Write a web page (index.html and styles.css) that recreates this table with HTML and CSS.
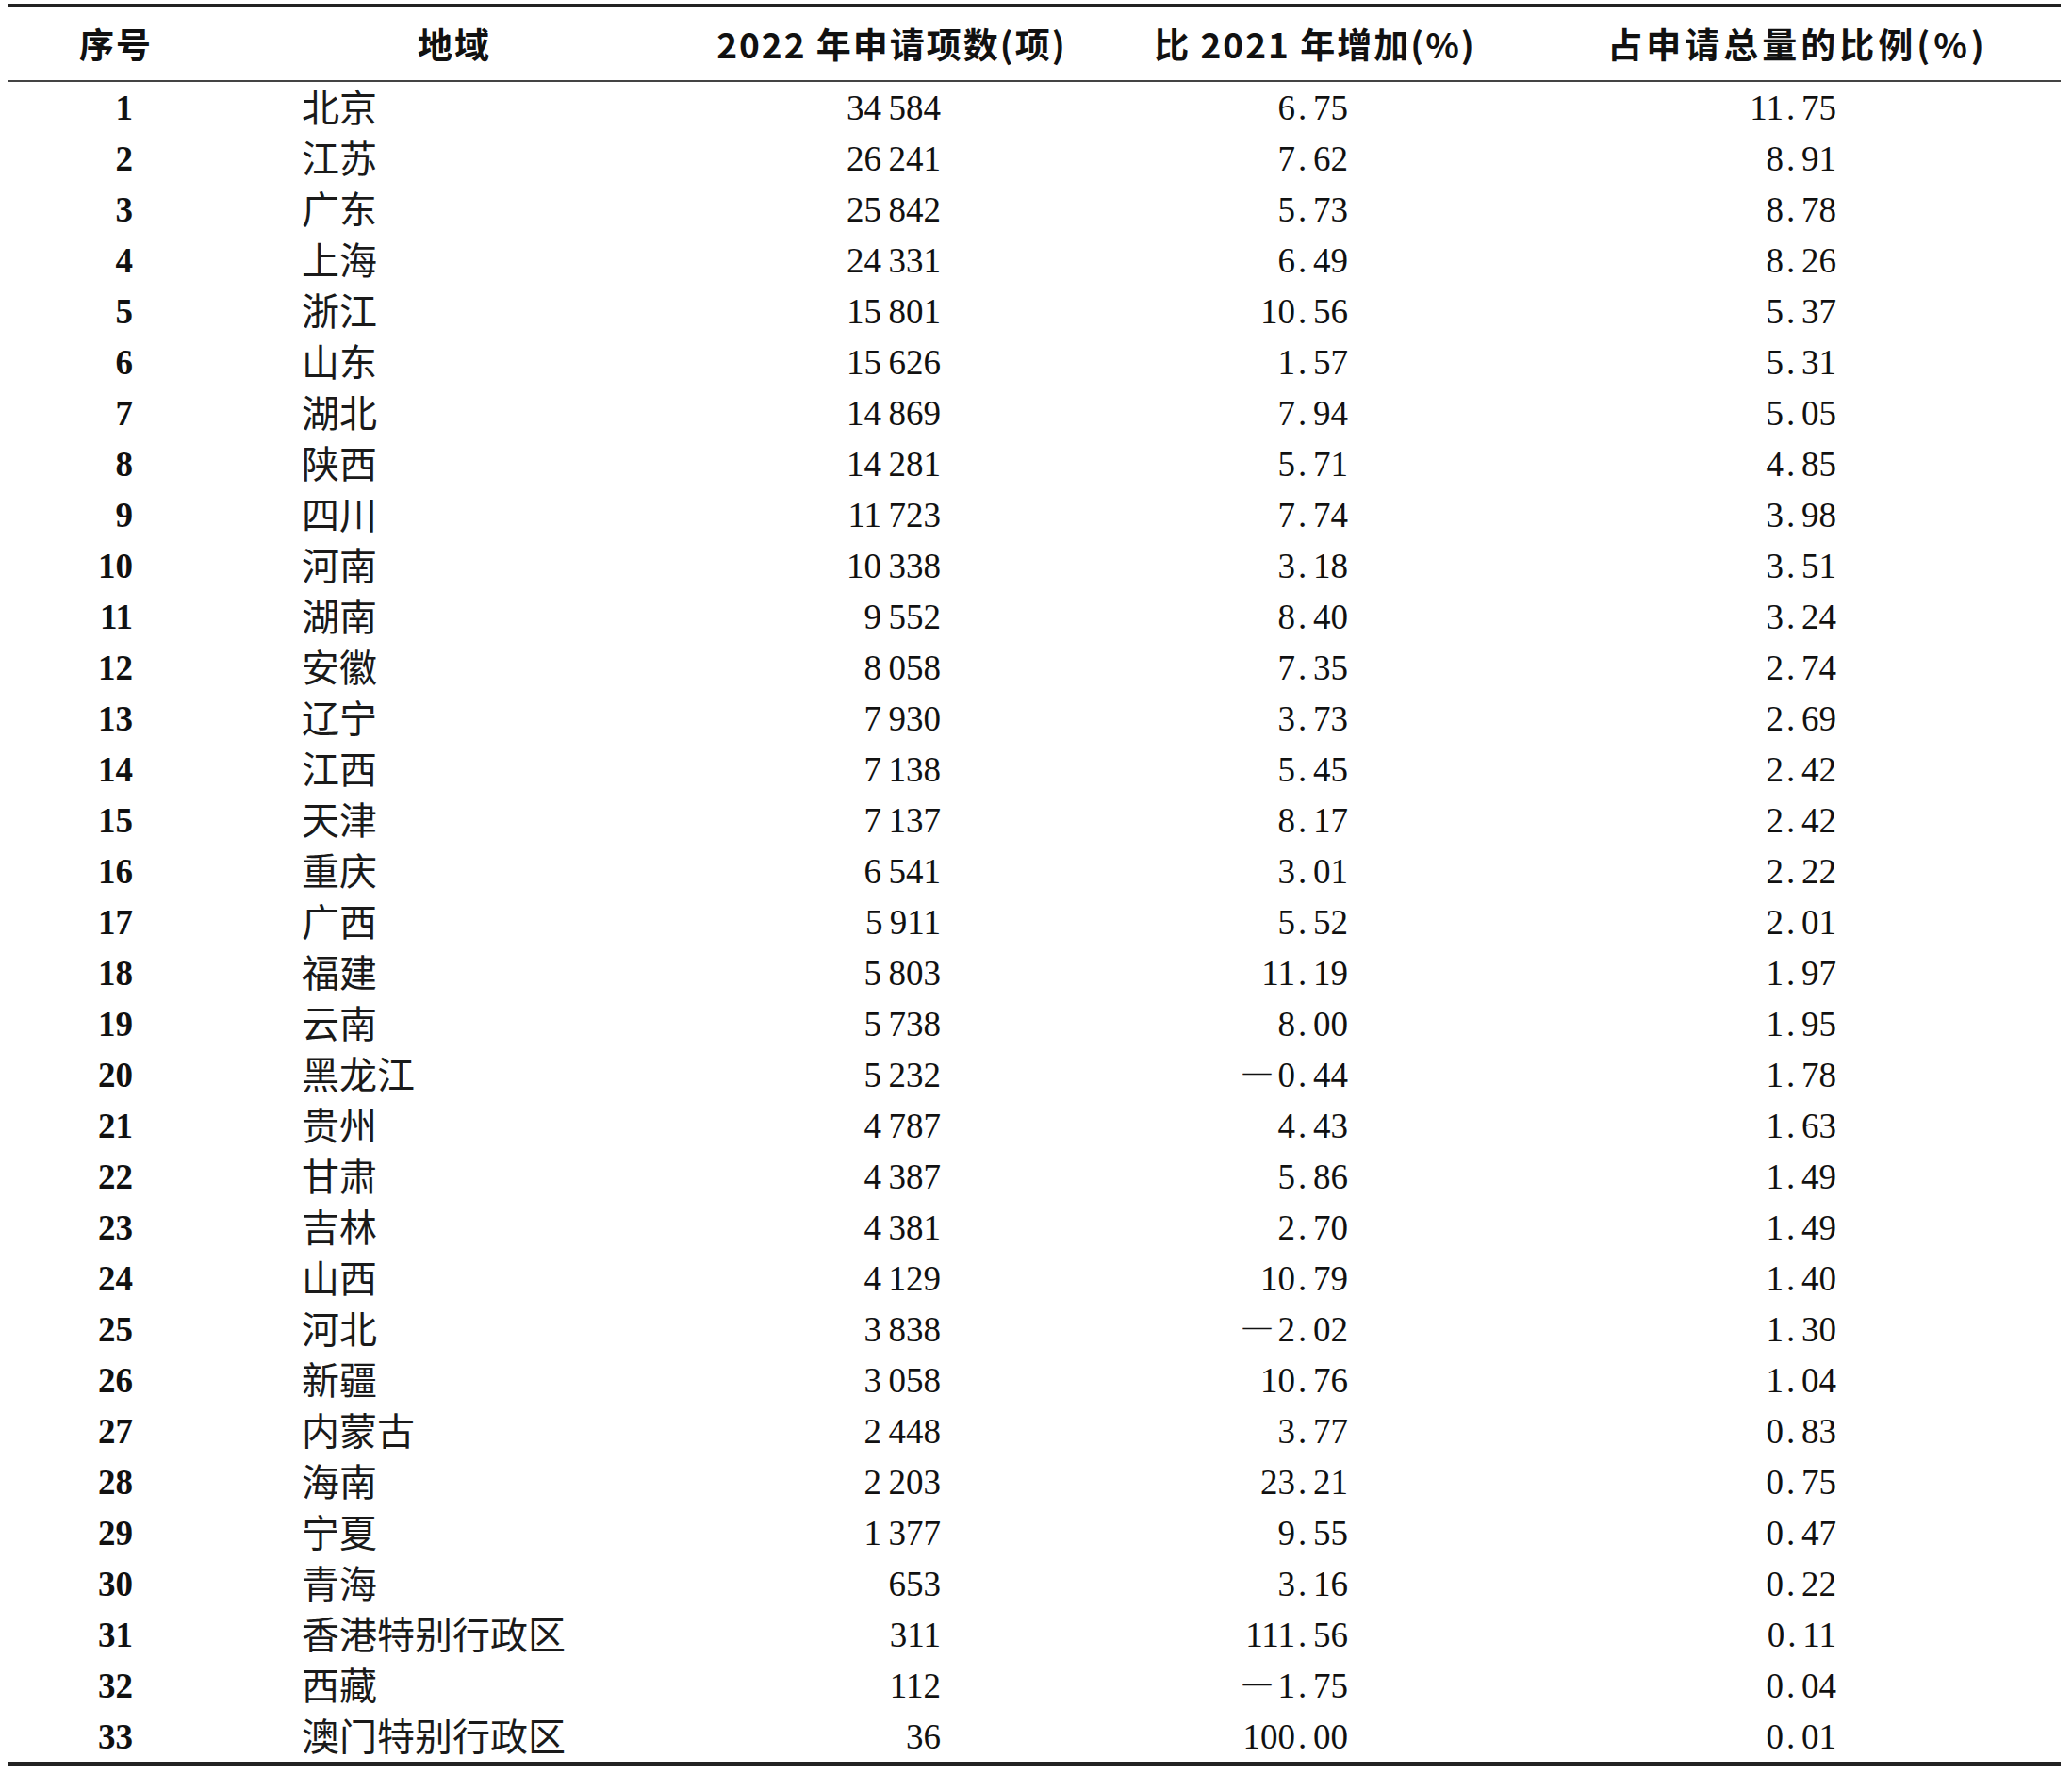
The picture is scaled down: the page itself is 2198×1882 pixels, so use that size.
FILE: index.html
```html
<!DOCTYPE html>
<html lang="zh-CN">
<head>
<meta charset="utf-8">
<title>2022 年申请项数</title>
<link rel="stylesheet" href="styles.css">
</head>
<body>
<div class="tbl">
  <div class="row head">
    <div class="h">序号</div>
    <div class="h">地域</div>
    <div class="h">2022 年申请项数(项)</div>
    <div class="h">比 2021 年增加(%)</div>
    <div class="h h5">占申请总量的比例(%)</div>
  </div>
  <div class="row"><div class="c1">1</div><div class="c2">北京</div><div class="c3">34&thinsp;584</div><div class="c4">6<span class="pt">.</span>75</div><div class="c5">11<span class="pt">.</span>75</div></div>
  <div class="row"><div class="c1">2</div><div class="c2">江苏</div><div class="c3">26&thinsp;241</div><div class="c4">7<span class="pt">.</span>62</div><div class="c5">8<span class="pt">.</span>91</div></div>
  <div class="row"><div class="c1">3</div><div class="c2">广东</div><div class="c3">25&thinsp;842</div><div class="c4">5<span class="pt">.</span>73</div><div class="c5">8<span class="pt">.</span>78</div></div>
  <div class="row"><div class="c1">4</div><div class="c2">上海</div><div class="c3">24&thinsp;331</div><div class="c4">6<span class="pt">.</span>49</div><div class="c5">8<span class="pt">.</span>26</div></div>
  <div class="row"><div class="c1">5</div><div class="c2">浙江</div><div class="c3">15&thinsp;801</div><div class="c4">10<span class="pt">.</span>56</div><div class="c5">5<span class="pt">.</span>37</div></div>
  <div class="row"><div class="c1">6</div><div class="c2">山东</div><div class="c3">15&thinsp;626</div><div class="c4">1<span class="pt">.</span>57</div><div class="c5">5<span class="pt">.</span>31</div></div>
  <div class="row"><div class="c1">7</div><div class="c2">湖北</div><div class="c3">14&thinsp;869</div><div class="c4">7<span class="pt">.</span>94</div><div class="c5">5<span class="pt">.</span>05</div></div>
  <div class="row"><div class="c1">8</div><div class="c2">陕西</div><div class="c3">14&thinsp;281</div><div class="c4">5<span class="pt">.</span>71</div><div class="c5">4<span class="pt">.</span>85</div></div>
  <div class="row"><div class="c1">9</div><div class="c2">四川</div><div class="c3">11&thinsp;723</div><div class="c4">7<span class="pt">.</span>74</div><div class="c5">3<span class="pt">.</span>98</div></div>
  <div class="row"><div class="c1">10</div><div class="c2">河南</div><div class="c3">10&thinsp;338</div><div class="c4">3<span class="pt">.</span>18</div><div class="c5">3<span class="pt">.</span>51</div></div>
  <div class="row"><div class="c1">11</div><div class="c2">湖南</div><div class="c3">9&thinsp;552</div><div class="c4">8<span class="pt">.</span>40</div><div class="c5">3<span class="pt">.</span>24</div></div>
  <div class="row"><div class="c1">12</div><div class="c2">安徽</div><div class="c3">8&thinsp;058</div><div class="c4">7<span class="pt">.</span>35</div><div class="c5">2<span class="pt">.</span>74</div></div>
  <div class="row"><div class="c1">13</div><div class="c2">辽宁</div><div class="c3">7&thinsp;930</div><div class="c4">3<span class="pt">.</span>73</div><div class="c5">2<span class="pt">.</span>69</div></div>
  <div class="row"><div class="c1">14</div><div class="c2">江西</div><div class="c3">7&thinsp;138</div><div class="c4">5<span class="pt">.</span>45</div><div class="c5">2<span class="pt">.</span>42</div></div>
  <div class="row"><div class="c1">15</div><div class="c2">天津</div><div class="c3">7&thinsp;137</div><div class="c4">8<span class="pt">.</span>17</div><div class="c5">2<span class="pt">.</span>42</div></div>
  <div class="row"><div class="c1">16</div><div class="c2">重庆</div><div class="c3">6&thinsp;541</div><div class="c4">3<span class="pt">.</span>01</div><div class="c5">2<span class="pt">.</span>22</div></div>
  <div class="row"><div class="c1">17</div><div class="c2">广西</div><div class="c3">5&thinsp;911</div><div class="c4">5<span class="pt">.</span>52</div><div class="c5">2<span class="pt">.</span>01</div></div>
  <div class="row"><div class="c1">18</div><div class="c2">福建</div><div class="c3">5&thinsp;803</div><div class="c4">11<span class="pt">.</span>19</div><div class="c5">1<span class="pt">.</span>97</div></div>
  <div class="row"><div class="c1">19</div><div class="c2">云南</div><div class="c3">5&thinsp;738</div><div class="c4">8<span class="pt">.</span>00</div><div class="c5">1<span class="pt">.</span>95</div></div>
  <div class="row"><div class="c1">20</div><div class="c2">黑龙江</div><div class="c3">5&thinsp;232</div><div class="c4"><span class="neg">—</span>0<span class="pt">.</span>44</div><div class="c5">1<span class="pt">.</span>78</div></div>
  <div class="row"><div class="c1">21</div><div class="c2">贵州</div><div class="c3">4&thinsp;787</div><div class="c4">4<span class="pt">.</span>43</div><div class="c5">1<span class="pt">.</span>63</div></div>
  <div class="row"><div class="c1">22</div><div class="c2">甘肃</div><div class="c3">4&thinsp;387</div><div class="c4">5<span class="pt">.</span>86</div><div class="c5">1<span class="pt">.</span>49</div></div>
  <div class="row"><div class="c1">23</div><div class="c2">吉林</div><div class="c3">4&thinsp;381</div><div class="c4">2<span class="pt">.</span>70</div><div class="c5">1<span class="pt">.</span>49</div></div>
  <div class="row"><div class="c1">24</div><div class="c2">山西</div><div class="c3">4&thinsp;129</div><div class="c4">10<span class="pt">.</span>79</div><div class="c5">1<span class="pt">.</span>40</div></div>
  <div class="row"><div class="c1">25</div><div class="c2">河北</div><div class="c3">3&thinsp;838</div><div class="c4"><span class="neg">—</span>2<span class="pt">.</span>02</div><div class="c5">1<span class="pt">.</span>30</div></div>
  <div class="row"><div class="c1">26</div><div class="c2">新疆</div><div class="c3">3&thinsp;058</div><div class="c4">10<span class="pt">.</span>76</div><div class="c5">1<span class="pt">.</span>04</div></div>
  <div class="row"><div class="c1">27</div><div class="c2">内蒙古</div><div class="c3">2&thinsp;448</div><div class="c4">3<span class="pt">.</span>77</div><div class="c5">0<span class="pt">.</span>83</div></div>
  <div class="row"><div class="c1">28</div><div class="c2">海南</div><div class="c3">2&thinsp;203</div><div class="c4">23<span class="pt">.</span>21</div><div class="c5">0<span class="pt">.</span>75</div></div>
  <div class="row"><div class="c1">29</div><div class="c2">宁夏</div><div class="c3">1&thinsp;377</div><div class="c4">9<span class="pt">.</span>55</div><div class="c5">0<span class="pt">.</span>47</div></div>
  <div class="row"><div class="c1">30</div><div class="c2">青海</div><div class="c3">653</div><div class="c4">3<span class="pt">.</span>16</div><div class="c5">0<span class="pt">.</span>22</div></div>
  <div class="row"><div class="c1">31</div><div class="c2">香港特别行政区</div><div class="c3">311</div><div class="c4">111<span class="pt">.</span>56</div><div class="c5">0<span class="pt">.</span>11</div></div>
  <div class="row"><div class="c1">32</div><div class="c2">西藏</div><div class="c3">112</div><div class="c4"><span class="neg">—</span>1<span class="pt">.</span>75</div><div class="c5">0<span class="pt">.</span>04</div></div>
  <div class="row"><div class="c1">33</div><div class="c2">澳门特别行政区</div><div class="c3">36</div><div class="c4">100<span class="pt">.</span>00</div><div class="c5">0<span class="pt">.</span>01</div></div>
</div>
</body>
</html>
```
FILE: styles.css
```css
html, body {
  margin: 0;
  padding: 0;
  background: #ffffff;
}

body {
  color: #111111;
  font-family: "Liberation Serif", "Noto Sans CJK SC", serif;
}

.tbl {
  margin: 4px 0 0 8px;
  width: 2178px;
  border-top: 3px solid #222222;
  border-bottom: 4px solid #222222;
}

.row {
  display: grid;
  grid-template-columns: 228px 490px 438px 460px 562px;
  height: 54px;
  align-items: center;
  line-height: 1;
  font-size: 37px;
}

.head {
  height: 78px;
  border-bottom: 2px solid #444444;
}

.h {
  text-align: center;
  font-family: "Noto Sans CJK SC", "Liberation Sans", sans-serif;
  font-weight: 700;
  font-size: 37px;
  letter-spacing: 2px;
  padding-left: 2px;
  color: #111111;
  white-space: nowrap;
}

.h5 {
  letter-spacing: 4px;
  padding-left: 4px;
}

.c1 {
  text-align: right;
  padding-right: 95px;
  font-weight: 700;
  font-family: "Liberation Serif", serif;
}

.c2 {
  padding-left: 84px;
  font-family: "Noto Sans CJK SC", sans-serif;
  font-weight: 400;
  font-size: 40px;
  color: #1a1a1a;
  white-space: nowrap;
  margin-top: -4px;
}

.c3, .c4, .c5 {
  text-align: right;
  font-family: "Liberation Serif", serif;
  white-space: nowrap;
}

.c3 { padding-right: 166px; }
.c4 { padding-right: 194px; }
.c5 { padding-right: 238px; }

.pt {
  display: inline-block;
  width: 19px;
  text-align: left;
  padding-left: 3px;
  box-sizing: border-box;
}

.neg {
  display: inline-block;
  font-size: 30px;
  margin-right: 7px;
  vertical-align: 6px;
}
```
